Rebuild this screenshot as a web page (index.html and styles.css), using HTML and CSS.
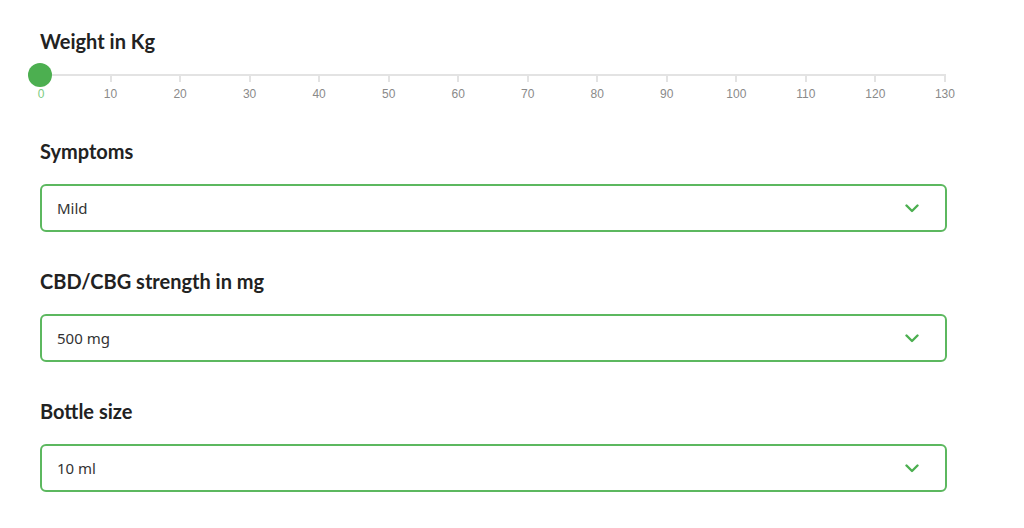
FILE: index.html
```html
<!DOCTYPE html>
<html lang="en">
<head>
	<meta charset="UTF-8">
	<title>Dosage calculator</title>
	<link rel="stylesheet" href="styles.css">
</head>
<body>

	<div class="calc">
		<div class="calc-field">
			<div class="calc-label">Weight in Kg</div>
			<div class="slider">
				<div class="slider-track"></div>
				<div class="slider-thumb"></div>
				<div class="slider-ticks">
					<div class="slider-tick active"><span>0</span></div>
					<div class="slider-tick"><span>10</span></div>
					<div class="slider-tick"><span>20</span></div>
					<div class="slider-tick"><span>30</span></div>
					<div class="slider-tick"><span>40</span></div>
					<div class="slider-tick"><span>50</span></div>
					<div class="slider-tick"><span>60</span></div>
					<div class="slider-tick"><span>70</span></div>
					<div class="slider-tick"><span>80</span></div>
					<div class="slider-tick"><span>90</span></div>
					<div class="slider-tick"><span>100</span></div>
					<div class="slider-tick"><span>110</span></div>
					<div class="slider-tick"><span>120</span></div>
					<div class="slider-tick"><span>130</span></div>
				</div>
			</div>
		</div>

		<div class="calc-field">
			<div class="calc-label">Symptoms</div>
			<div class="calc-select">
				<span>Mild</span>
				<svg class="calc-chevron" width="14" height="9" viewBox="0 0 14 9"><path d="M1.5 1.5 L7 7 L12.5 1.5" fill="none" stroke="#4caf50" stroke-width="2.4" stroke-linecap="round" stroke-linejoin="round"/></svg>
			</div>
		</div>

		<div class="calc-field">
			<div class="calc-label">CBD/CBG strength in mg</div>
			<div class="calc-select">
				<span>500 mg</span>
				<svg class="calc-chevron" width="14" height="9" viewBox="0 0 14 9"><path d="M1.5 1.5 L7 7 L12.5 1.5" fill="none" stroke="#4caf50" stroke-width="2.4" stroke-linecap="round" stroke-linejoin="round"/></svg>
			</div>
		</div>

		<div class="calc-field">
			<div class="calc-label">Bottle size</div>
			<div class="calc-select">
				<span>10 ml</span>
				<svg class="calc-chevron" width="14" height="9" viewBox="0 0 14 9"><path d="M1.5 1.5 L7 7 L12.5 1.5" fill="none" stroke="#4caf50" stroke-width="2.4" stroke-linecap="round" stroke-linejoin="round"/></svg>
			</div>
		</div>
	</div>

</body>
</html>
```

FILE: styles.css
```css
body {
	margin: 0;
	background-color: #fff;
	font-family: "Noto Sans", "Open Sans", sans-serif;
	color: #222;
}
.calc {
	width: 907px;
	padding: 26px 0 0 40px;
}

.calc-label {
	font-family: Lato, "Noto Sans", sans-serif;
	font-size: 20px;
	font-weight: bold;
	line-height: 30px;
	color: #222;
	margin-bottom: 18px;
}
.calc-field {
	margin-bottom: 34px;
}
.calc-field:first-child {
	margin-bottom: 28px;
}
.calc-field:first-child .calc-label {
	margin-bottom: 18px;
}

/* slider */
.slider {
	position: relative;
	width: 906px;
	height: 34px;
}
.slider-track {
	height: 2px;
	background-color: #e3e3e3;
}
.slider-thumb {
	position: absolute;
	left: -12px;
	top: -11px;
	width: 24px;
	height: 24px;
	border-radius: 50%;
	background-color: #4caf50;
}
.slider-ticks {
	display: flex;
	justify-content: space-between;
}
.slider-tick {
	position: relative;
	width: 2px;
	height: 6px;
	background-color: #e3e3e3;
}
.slider-tick span {
	position: absolute;
	top: 11px;
	left: 1px;
	transform: translateX(-50%);
	font-family: "Liberation Sans", Arial, sans-serif;
	font-size: 12px;
	color: #8a8a8a;
	white-space: nowrap;
}
.slider-tick.active {
	background-color: transparent;
}
.slider-tick.active span {
	color: #7ccb7f;
}

/* select box */
.calc-select {
	display: flex;
	align-items: center;
	justify-content: space-between;
	box-sizing: border-box;
	height: 48px;
	padding: 0 26px 0 15px;
	border: 2px solid #5cb85f;
	border-radius: 6px;
	font-size: 15px;
	color: #333;
}
.calc-chevron {
	display: block;
}
```
